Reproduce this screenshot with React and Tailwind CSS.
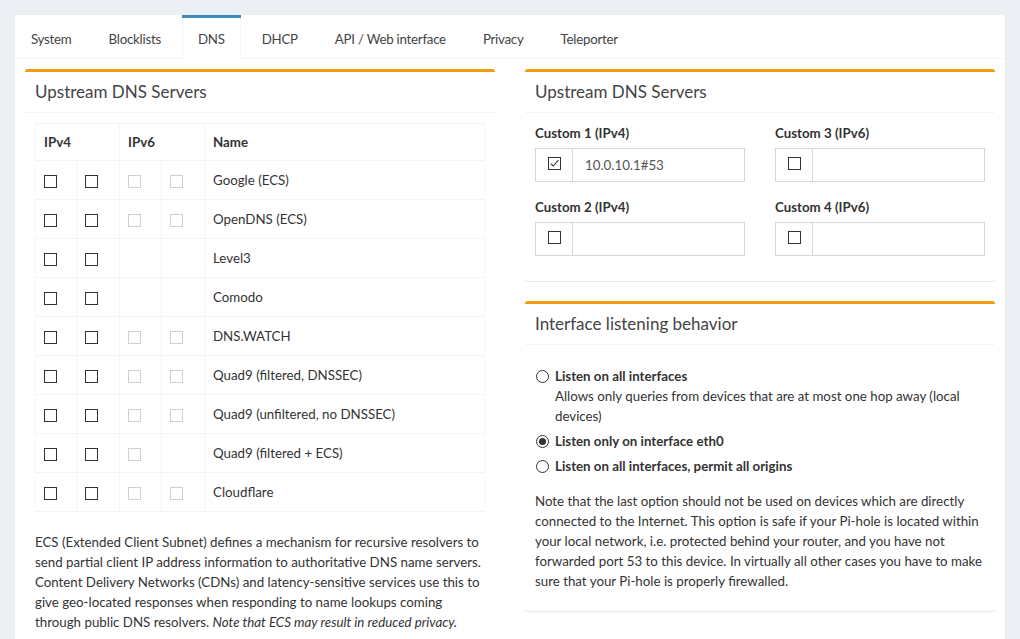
import React from "react";

const FONT = "font-['Lato','Noto_Sans',sans-serif]";

function Box({ disabled, checked }) {
  return (
    <span
      className={`inline-flex items-center justify-center w-[13px] h-[13px] border bg-white align-middle ${
        disabled ? "border-[#cfcfcf]" : "border-[#333333]"
      }`}
    >
      {checked && (
        <svg width="11" height="11" viewBox="0 0 11 11" className="block">
          <path d="M1.8 5.6 L4.2 8 L9.4 2.2" fill="none" stroke="#333" strokeWidth="1.1" />
        </svg>
      )}
    </span>
  );
}

function Radio({ checked }) {
  return (
    <span className="flex items-center justify-center w-[13px] h-[13px] shrink-0 rounded-full border border-[#333333] bg-white mt-[4px] ml-[1px]">
      {checked && <span className="block w-[7px] h-[7px] rounded-full bg-[#333333]" />}
    </span>
  );
}

function Card({ title, children }) {
  return (
    <div className="bg-white rounded-[3px] border-t-[3px] border-[#f39c12] shadow-[0_1px_1px_rgba(0,0,0,0.1)] mb-5">
      <div className="px-[10px] py-[10px] border-b border-[#f4f4f4]">
        <h3 className="text-[17px] leading-[20px] text-[#444444]">{title}</h3>
      </div>
      <div className="p-[10px]">{children}</div>
    </div>
  );
}

const rows = [
  ["Google (ECS)", 2],
  ["OpenDNS (ECS)", 2],
  ["Level3", 0],
  ["Comodo", 0],
  ["DNS.WATCH", 2],
  ["Quad9 (filtered, DNSSEC)", 2],
  ["Quad9 (unfiltered, no DNSSEC)", 2],
  ["Quad9 (filtered + ECS)", 1],
  ["Cloudflare", 2],
];

const tabs = ["System", "Blocklists", "DNS", "DHCP", "API / Web interface", "Privacy", "Teleporter"];

function InputGroup({ checked, value }) {
  return (
    <div className="flex h-[34px]">
      <div className="w-[38px] shrink-0 border border-[#d2d6de] flex justify-center pt-[8px]">
        <Box checked={checked} />
      </div>
      <div className="flex-1 border border-l-0 border-[#d2d6de] px-[12px] flex items-center text-[#555555]">
        {value}
      </div>
    </div>
  );
}

export default function App() {
  return (
    <div className={`min-h-[639px] bg-[#ecf0f5] p-[15px] text-[13.3px] leading-[20px] text-[#333333] ${FONT}`}>
      <div className="bg-white rounded-[3px] shadow-[0_1px_1px_rgba(0,0,0,0.1)]">
        <ul className="flex border-b border-[#f4f4f4]">
          {tabs.map((t) => {
            const active = t === "DNS";
            return (
              <li
                key={t}
                className={`mr-[5px] border-t-[3px] -mb-px ${
                  active ? "border-[#3c8dbc] bg-white" : "border-transparent"
                }`}
              >
                <div
                  className={`px-[15px] pt-[11px] pb-[9px] border-x text-[#444444] tracking-[-0.25px] ${
                    active ? "border-[#f4f4f4] border-b border-b-white" : "border-transparent border-b border-b-transparent"
                  }`}
                >
                  {t}
                </div>
              </li>
            );
          })}
        </ul>
        <div className="p-[10px]">
          <div className="grid grid-cols-2 gap-x-[30px] items-start">
            <Card title="Upstream DNS Servers">
              <table className="w-full border-collapse border border-[#f4f4f4] mb-[20px]">
                <colgroup>
                  <col className="w-[41px]" />
                  <col className="w-[43px]" />
                  <col className="w-[42px]" />
                  <col className="w-[43px]" />
                  <col />
                </colgroup>
                <thead>
                  <tr className="h-[37px]">
                    <th colSpan={2} className="border border-[#f4f4f4] px-[8px] text-left font-bold">IPv4</th>
                    <th colSpan={2} className="border border-[#f4f4f4] px-[8px] text-left font-bold">IPv6</th>
                    <th className="border border-[#f4f4f4] px-[8px] text-left font-bold">Name</th>
                  </tr>
                </thead>
                <tbody>
                  {rows.map(([name, v6]) => (
                    <tr key={name} className="h-[39px]">
                      <td className="border border-[#f4f4f4] px-[8px]"><Box /></td>
                      <td className="border border-[#f4f4f4] px-[8px]"><Box /></td>
                      <td className="border border-[#f4f4f4] px-[8px]">{v6 >= 1 && <Box disabled />}</td>
                      <td className="border border-[#f4f4f4] px-[8px]">{v6 >= 2 && <Box disabled />}</td>
                      <td className="border border-[#f4f4f4] px-[8px]">{name}</td>
                    </tr>
                  ))}
                </tbody>
              </table>
              <p className="mb-[10px]">
                <span className="block whitespace-nowrap">ECS (Extended Client Subnet) defines a mechanism for recursive resolvers to</span>
                <span className="block whitespace-nowrap">send partial client IP address information to authoritative DNS name servers.</span>
                <span className="block whitespace-nowrap">Content Delivery Networks (CDNs) and latency-sensitive services use this to</span>
                <span className="block whitespace-nowrap">give geo-located responses when responding to name lookups coming</span>
                <span className="block whitespace-nowrap">
                  through public DNS resolvers. <em>Note that ECS may result in reduced privacy.</em>
                </span>
              </p>
            </Card>
            <div>
              <Card title="Upstream DNS Servers">
                <div className="grid grid-cols-2 gap-x-[30px]">
                  <div className="mb-[15px]">
                    <label className="block font-bold mb-[5px]">Custom 1 (IPv4)</label>
                    <InputGroup checked value="10.0.10.1#53" />
                  </div>
                  <div className="mb-[15px]">
                    <label className="block font-bold mb-[5px]">Custom 3 (IPv6)</label>
                    <InputGroup />
                  </div>
                  <div className="mb-[15px]">
                    <label className="block font-bold mb-[5px]">Custom 2 (IPv4)</label>
                    <InputGroup />
                  </div>
                  <div className="mb-[15px]">
                    <label className="block font-bold mb-[5px]">Custom 4 (IPv6)</label>
                    <InputGroup />
                  </div>
                </div>
              </Card>
              <Card title="Interface listening behavior">
                <div className="mt-[11px] flex flex-col gap-[5px]">
                  <div className="flex gap-[6px]">
                    <Radio />
                    <div>
                      <div className="font-bold">Listen on all interfaces</div>
                      <div className="whitespace-nowrap">Allows only queries from devices that are at most one hop away (local</div>
                      <div>devices)</div>
                    </div>
                  </div>
                  <div className="flex gap-[6px]">
                    <Radio checked />
                    <div className="font-bold">Listen only on interface eth0</div>
                  </div>
                  <div className="flex gap-[6px]">
                    <Radio />
                    <div className="font-bold">Listen on all interfaces, permit all origins</div>
                  </div>
                </div>
                <p className="mt-[15px] mb-[10px]">
                  <span className="block whitespace-nowrap">Note that the last option should not be used on devices which are directly</span>
                  <span className="block whitespace-nowrap">connected to the Internet. This option is safe if your Pi-hole is located within</span>
                  <span className="block whitespace-nowrap">your local network, i.e. protected behind your router, and you have not</span>
                  <span className="block whitespace-nowrap">forwarded port 53 to this device. In virtually all other cases you have to make</span>
                  <span className="block whitespace-nowrap">sure that your Pi-hole is properly firewalled.</span>
                </p>
              </Card>
            </div>
          </div>
        </div>
      </div>
    </div>
  );
}
